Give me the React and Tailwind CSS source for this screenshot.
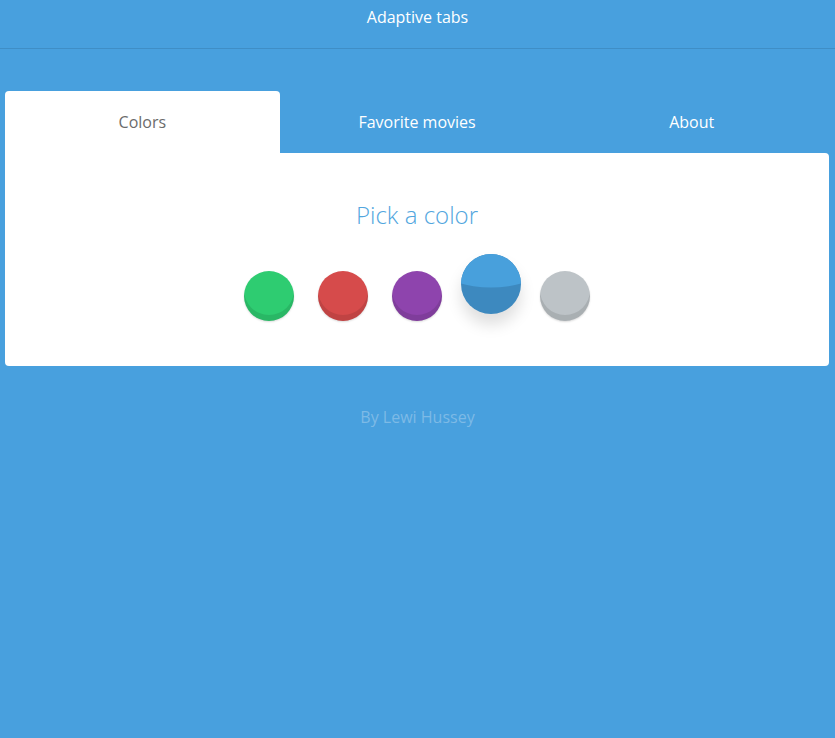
import { useState } from 'react'

const colors = [
  { name: 'green', bg: 'bg-[#2ecc71]', dark: 'bg-[#29b765]' },
  { name: 'red', bg: 'bg-[#d64b4b]', dark: 'bg-[#c04343]' },
  { name: 'purple', bg: 'bg-[#8e44ad]', dark: 'bg-[#7f3d9b]' },
  { name: 'blue', bg: 'bg-[#48a0dc]', dark: 'bg-[#3d89bf]' },
  { name: 'gray', bg: 'bg-[#bdc3c7]', dark: 'bg-[#a9aeb2]' },
]

const tabs = ['Colors', 'Favorite movies', 'About']

function Swatch({ color, active, onClick }) {
  if (active) {
    return (
      <button
        onClick={onClick}
        className={`relative h-[50px] w-[50px] shrink-0 overflow-hidden rounded-full ${color.dark} -translate-y-[12px] scale-[1.2] shadow-[0_9px_12px_rgba(0,0,0,0.13)]`}
      >
        <span className={`absolute left-[-50px] top-[-89px] h-[117px] w-[150px] rounded-[50%] ${color.bg}`} />
      </button>
    )
  }
  return (
    <button
      onClick={onClick}
      className={`h-[50px] w-[50px] shrink-0 rounded-full ${color.bg} shadow-[inset_0_-6px_0_rgba(0,0,0,0.1),0_1px_2px_rgba(0,0,0,0.15)]`}
    />
  )
}

export default function App() {
  const [tab, setTab] = useState(0)
  const [picked, setPicked] = useState(3)

  return (
    <div className="min-h-[738px] bg-[#48a0de] font-['Open_Sans',sans-serif]">
      <header className="h-[49px] border-b border-[#3f8ec6] pt-[5px] text-center text-[16px] leading-[24px] font-medium text-white">
        Adaptive tabs
      </header>

      <div className="ml-[5px] mt-[42px] w-[824px]">
        <div className="flex">
          {tabs.map((t, i) => (
            <button
              key={t}
              onClick={() => setTab(i)}
              className={`h-[62px] flex-1 rounded-t-[4px] text-[16px] ${
                tab === i ? 'bg-white font-normal text-[#6b6b6b]' : 'font-medium text-white'
              }`}
            >
              {t}
            </button>
          ))}
        </div>

        <div className={`bg-white ${tab === 0 ? 'rounded-tr-[4px]' : 'rounded-t-[4px]'} rounded-b-[4px] h-[213px] pt-[45px]`}>
          {tab === 0 && (
            <>
              <h2 className="text-center text-[24px] leading-[34px] font-light text-[#52a6de]">Pick a color</h2>
              <div className="mt-[39px] flex justify-center gap-[24px]">
                {colors.map((c, i) => (
                  <Swatch key={c.name} color={c} active={picked === i} onClick={() => setPicked(i)} />
                ))}
              </div>
            </>
          )}
          {tab === 1 && <h2 className="text-center text-[24px] font-light text-[#52a6de]">Favorite movies</h2>}
          {tab === 2 && <h2 className="text-center text-[24px] font-light text-[#52a6de]">About</h2>}
        </div>
      </div>

      <p className="mt-[40px] text-center text-[16px] leading-[22px] font-normal text-[#7dbae6]">By Lewi Hussey</p>
    </div>
  )
}
